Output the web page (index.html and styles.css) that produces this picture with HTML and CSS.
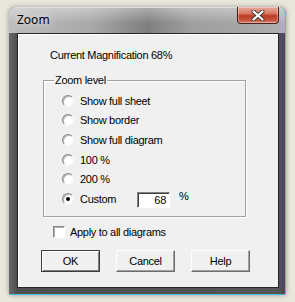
FILE: index.html
```html
<!DOCTYPE html>
<html lang="en">
<head>
    <meta charset="UTF-8">
    <title>Zoom</title>
    <link rel="stylesheet" href="styles.css">
</head>
<body>
    <div class="window">
        <div class="titlebar">
            <span class="title">Zoom</span>
            <button class="close-btn" aria-label="Close">
                <svg width="14" height="11" viewBox="0 0 14 11">
                    <path d="M2.5 1.5 L11.5 9.5 M11.5 1.5 L2.5 9.5" stroke="#3a3a3a" stroke-width="4" stroke-linecap="round"/>
                    <path d="M2.5 1.5 L11.5 9.5 M11.5 1.5 L2.5 9.5" stroke="#fff" stroke-width="2.2" stroke-linecap="round"/>
                </svg>
            </button>
        </div>
        <div class="frame">
            <div class="client">
                <div class="current">Current Magnification 68%</div>
                <fieldset class="group">
                    <legend>Zoom level</legend>
                    <label class="radio-row"><span class="radio"></span>Show full sheet</label>
                    <label class="radio-row"><span class="radio"></span>Show border</label>
                    <label class="radio-row"><span class="radio"></span>Show full diagram</label>
                    <label class="radio-row"><span class="radio"></span>100 %</label>
                    <label class="radio-row"><span class="radio"></span>200 %</label>
                    <div class="radio-row">
                        <span class="radio checked"></span>
                        <span class="custom-label">Custom</span>
                        <span class="edit">68</span>
                        <span class="percent">%</span>
                    </div>
                </fieldset>
                <label class="check-row"><span class="checkbox"></span>Apply to all diagrams</label>
                <div class="buttons">
                    <button class="btn default">OK</button>
                    <button class="btn">Cancel</button>
                    <button class="btn">Help</button>
                </div>
            </div>
        </div>
    </div>
</body>
</html>
```

FILE: styles.css
```css
html, body {
    margin: 0;
    padding: 0;
}
body {
    width: 295px;
    height: 302px;
    overflow: hidden;
    background: #e9e6db;
    font-family: 'Liberation Sans', Arial, sans-serif;
    font-size: 11px;
    color: #000;
}
.window {
    margin: 7px 0 0 9px;
    width: 277px;
    height: 288px;
    border-radius: 6px 6px 2px 2px;
    background: #5a5a5a;
    border-right: 1px solid #3fc3e6;
    border-bottom: 1px solid #3fc3e6;
    box-sizing: border-box;
    overflow: hidden;
    box-shadow: 0 0 5px rgba(0,0,0,0.35);
}
.titlebar {
    height: 26px;
    display: flex;
    justify-content: space-between;
    align-items: flex-start;
    background:
        linear-gradient(180deg, rgba(255,255,255,0.35), rgba(255,255,255,0) 60%),
        linear-gradient(90deg, #bdbdbd 0%, #a9a9a9 30%, #7f7f7f 50%, #9f9f9f 66%, #a6a6a6 85%, #b0b0b0 100%);
    border-top: 1px solid #e0e0e0;
    box-sizing: border-box;
}
.title {
    font-family: 'Noto Sans', sans-serif;
    font-size: 12px;
    line-height: 24px;
    padding-left: 8px;
    color: #000;
    text-shadow: 0 0 6px rgba(255,255,255,0.9);
}
.close-btn {
    width: 42px;
    height: 17px;
    margin: -1px 6px 0 0;
    padding: 0;
    border: 1px solid #4a2019;
    border-top: none;
    border-radius: 0 0 4px 4px;
    background: linear-gradient(180deg, #e9a999 0%, #d77a65 40%, #bd3c25 55%, #c4513b 80%, #d8806a 100%);
    box-shadow: inset 0 0 0 1px rgba(255,255,255,0.35);
    display: flex;
    align-items: center;
    justify-content: center;
}
.frame {
    padding: 0 6px 6px 8px;
    background: linear-gradient(90deg, #6a6a6a, #4e4e4e 3%, #555 97%, #4a4a4a);
}
.client {
    height: 255px;
    box-sizing: border-box;
    background: #f0f0f0;
    border: 1px solid #262626;
    box-shadow: inset 1px 1px 0 #fff;
    display: flex;
    flex-direction: column;
    align-items: flex-start;
    letter-spacing: -0.3px;
}
.current {
    line-height: 13px;
    margin: 15px 0 0 32px;
}
.group {
    margin: 12px 0 0 25px;
    width: 203px;
    box-sizing: border-box;
    padding: 4px 0 7px 18px;
    border: 1px solid #a0a0a0;
    box-shadow: 1px 1px 0 #fff, inset 1px 1px 0 #fff;
    display: flex;
    flex-direction: column;
}
.group legend {
    padding: 0 1px;
    margin-left: -8px;
    line-height: 13px;
}
.radio-row {
    height: 19.6px;
    display: flex;
    align-items: center;
}
.radio {
    width: 12px;
    height: 12px;
    box-sizing: border-box;
    border-radius: 50%;
    border: 1px solid;
    border-color: #8a8a8a #f4f4f4 #f4f4f4 #8a8a8a;
    background: radial-gradient(circle at 60% 60%, #fff 50%, #e4e4e4 100%);
    box-shadow: inset 1px 1px 0 #b8b8b8;
    margin-right: 6px;
    flex: none;
    display: flex;
    align-items: center;
    justify-content: center;
}
.radio.checked::after {
    content: "";
    width: 4px;
    height: 4px;
    border-radius: 50%;
    background: #000;
}
.custom-label {
    width: 57px;
}
.edit {
    width: 33px;
    height: 16px;
    box-sizing: border-box;
    margin-top: 2px;
    border: 1px solid;
    border-color: #808080 #fff #fff #808080;
    box-shadow: inset 1px 1px 0 #404040;
    background: #fff;
    text-align: right;
    padding-right: 3px;
    line-height: 14px;
}
.percent {
    margin-left: 9px;
    margin-top: -5px;
}
.check-row {
    margin: 9px 0 0 35px;
    height: 13px;
    display: flex;
    align-items: center;
}
.checkbox {
    width: 12px;
    height: 12px;
    box-sizing: border-box;
    border: 1px solid;
    border-color: #8a8a8a #fff #fff #8a8a8a;
    box-shadow: inset 1px 1px 0 #b0b0b0;
    background: #fff;
    margin-right: 5px;
}
.buttons {
    margin: 11px 0 0 23px;
    display: flex;
    gap: 16px;
}
.btn {
    width: 59px;
    height: 22px;
    padding: 0;
    font-family: 'Liberation Sans', Arial, sans-serif;
    font-size: 11px;
    letter-spacing: -0.3px;
    color: #000;
    background: #f0f0f0;
    border: 1px solid;
    border-color: #fff #6e6e6e #6e6e6e #fff;
    box-shadow: inset -1px -1px 0 #a0a0a0;
    box-sizing: border-box;
}
.btn.default {
    border: 1px solid #3c3c3c;
    box-shadow: inset 1px 1px 0 #fff, inset -1px -1px 0 #808080;
}
```
